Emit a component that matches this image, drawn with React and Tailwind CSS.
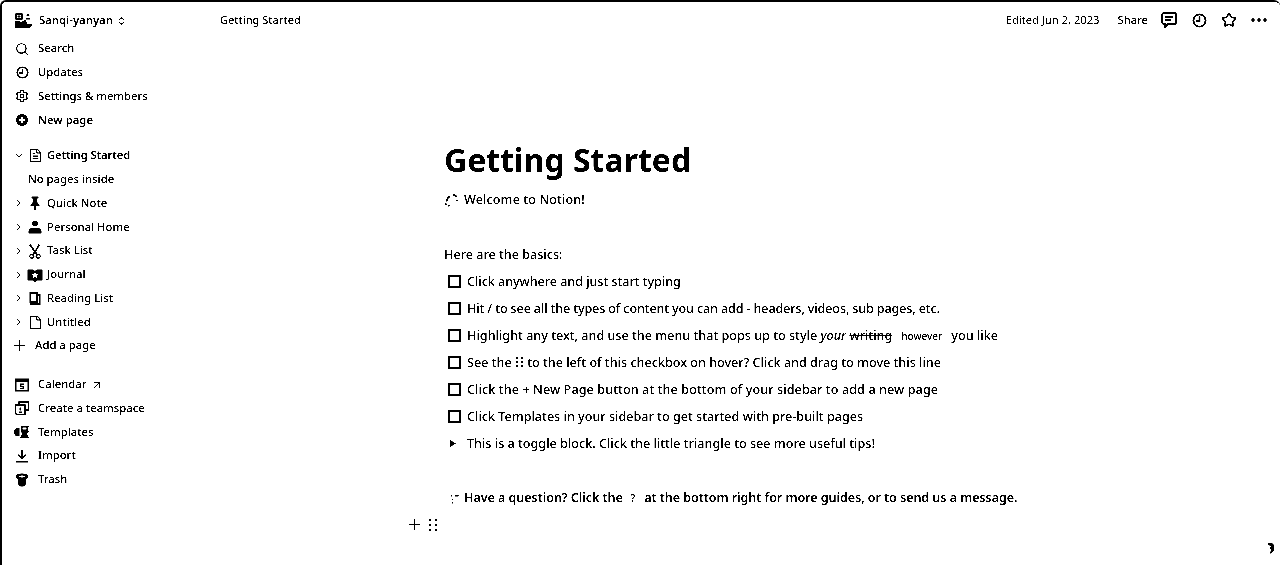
import React from "react";
import { Search, Settings, ChevronRight, ChevronDown, FileText, File, ArrowUpRight, Star } from "lucide-react";

const Svg = ({ children, size = 16, className = "" }) => (
  <svg width={size} height={size} viewBox="0 0 16 16" className={"shrink-0 " + className} fill="currentColor">{children}</svg>
);

const Workspace = () => (
  <svg width="17" height="15" viewBox="0 0 17 15" fill="currentColor" className="shrink-0">
    <rect x="1" y="1" width="6" height="5" fill="none" stroke="currentColor" strokeWidth="1.400" />
    <rect x="2.500" y="2.500" width="3" height="2" />
    <path d="M0 15V8h4.500l1.500 1.500L9.500 7H11l1 4h5v1.500L15 15z" />
    <circle cx="13" cy="2" r="1.600" />
    <path d="M11 5h4v1.600h-4z" />
  </svg>
);
const UpDown = () => (
  <svg width="7" height="10" viewBox="0 0 7 10" fill="none" stroke="currentColor" strokeWidth="1.100" className="shrink-0">
    <path d="M1 4l2.500-2.500L6 4M1 6l2.500 2.500L6 6" />
  </svg>
);
const ClockIcon = ({ size = 14 }) => (
  <svg width={size} height={size} viewBox="0 0 16 16" fill="none" stroke="currentColor" strokeWidth="2" className="shrink-0">
    <circle cx="8" cy="8" r="6.500" />
    <path d="M8 3.500V8.500H4" />
  </svg>
);
const Bubble = () => (
  <svg width="16" height="16" viewBox="0 0 16 16" fill="none" stroke="currentColor" strokeWidth="1.800" className="shrink-0">
    <path d="M3 1h10a2 2 0 0 1 2 2v7a2 2 0 0 1-2 2H7l-3 3v-3H3a2 2 0 0 1-2-2V3a2 2 0 0 1 2-2z" />
    <path d="M4 5h8M4 8h6" strokeWidth="1.400" />
  </svg>
);
const NewPage = () => (
  <Svg>
    <path fillRule="evenodd" d="M8 2a6 6 0 1 1 0 12A6 6 0 0 1 8 2zM7 5v2H5v2h2v2h2V9h2V7H9V5z" />
  </Svg>
);
const PlusBars = ({ size = 11 }) => (
  <svg width={size} height={size} viewBox="0 0 11 11" fill="currentColor" className="shrink-0">
    <rect x="5" y="0" width="1" height="11" shapeRendering="crispEdges" />
    <rect x="0" y="5" width="11" height="1" shapeRendering="crispEdges" />
  </svg>
);
const Pin = () => (
  <Svg>
    <path d="M4.500 1.500h7V3l-1.500.8.500 4 2 2V11H9v4H7v-4H3.500V9.800l2-2 .5-4L4.500 3z" />
  </Svg>
);
const Person = () => (
  <Svg>
    <circle cx="8" cy="4.500" r="3" />
    <path d="M1.500 14.500v-2.500C1.500 10 4 8.800 8 8.800s6.500 1.200 6.500 3.200v2.500z" />
  </Svg>
);
const Tools = () => (
  <Svg>
    <path d="M3.500 1 8 7.500 11.500 1 13 2 9 8.800l1.500 2a2.600 2.600 0 1 1-1.500 1L8 10l-1 1.800a2.600 2.600 0 1 1-1.500-1L7 8.800 2 2zM4.500 12a1.300 1.300 0 1 0 0 2.600 1.300 1.300 0 0 0 0-2.600zm7 0a1.300 1.300 0 1 0 0 2.600 1.300 1.300 0 0 0 0-2.600z" />
  </Svg>
);
const Journal = () => (
  <Svg>
    <path d="M.5 2.500h6L8 4l1.500-1.500h6v11h-5.500L8 15l-2-1.500H.5z" />
    <path fill="#fff" d="M8 5l1.100 2.100 2.400.3-1.800 1.500.6 2.400L8 10l-2.300 1.300.6-2.400-1.800-1.500 2.400-.3z" />
  </Svg>
);
const Reading = () => (
  <Svg>
    <path d="M2.500 2H11v2h2.500v11H4.500a2 2 0 0 1-2-2zM4.200 4v7h5.200V4zM11 6v7.300h1V6z" fillRule="evenodd" />
  </Svg>
);
const CalendarIcon = () => (
  <Svg>
    <path fillRule="evenodd" d="M1 1.500h14v13H1zM2.500 5v8h11V5z" />
    <path d="M6 6.500h4v1.200H7.300v1H10V12H6v-1.200h2.700v-1H6z" />
  </Svg>
);
const Team = () => (
  <Svg>
    <path fill="none" stroke="currentColor" strokeWidth="1.400" d="M5 5V2h9.500v8H11M1.500 5H11v9.500H3a1.500 1.500 0 0 1-1.500-1.500z" />
    <path d="M5.500 7.500h1.500v3H5.500zM5 11.500h3V13H5z" />
  </Svg>
);
const Templates = () => (
  <Svg>
    <path d="M5.500 4.500 4.500 3.500a4.500 4.500 0 0 0 0 9l1-1z" />
    <path d="M6.500 2h8.500L13.500 5.500l1.500 2.500-2.500 1 2.500 5H6l2.500-5-2-1 1-2.500z" />
    <rect x="8.500" y="3.500" width="4" height="2" fill="#fff" />
  </Svg>
);
const ImportIcon = () => (
  <Svg>
    <path d="M7.200 1.500h1.600v7.200l2.600-2.500 1.100 1.100L8 11.700 3.500 7.300l1.100-1.100 2.600 2.500zM2 13h12v1.500H2z" />
  </Svg>
);
const Trash = () => (
  <Svg>
    <path fillRule="evenodd" d="M8 1.500c3.500 0 6 1.200 6 3 0 1-.7 1.800-1.800 2.300L11.500 13c-.3 1-1.700 1.500-3.500 1.500S4.800 14 4.500 13L3.800 6.800C2.700 6.300 2 5.500 2 4.500c0-1.800 2.500-3 6-3zM4.500 4.500c.8.700 2 1 3.500 1s2.700-.3 3.500-1c-.8-.6-2-1-3.500-1s-2.700.4-3.500 1z" />
  </Svg>
);
const Sparkle = () => (
  <Svg size={15}>
    <path d="M10 1h2v1.500h1.500v2H12V3.500h-2zM3 5 5.500 3l1 1.200L4.500 6.200 3.500 9H2zM1 11h1.800v2H1zM4 12.500h2v2H4zM13 7h1.500v2H13z" />
  </Svg>
);
const Dashes = () => (
  <Svg size={10}>
    <path d="M1 2h3v2H1zM8 2h6v2H8zM3 8h2v2H3zM3 13h2v2H3z" />
  </Svg>
);
const Grip = () => (
  <svg width="10" height="14" viewBox="0 0 10 14" className="shrink-0" fill="currentColor">
    <rect x="1" y="1" width="2" height="2" /><rect x="7" y="1" width="2" height="2" />
    <rect x="1" y="6" width="2" height="2" /><rect x="7" y="6" width="2" height="2" />
    <rect x="1" y="11" width="2" height="2" /><rect x="7" y="11" width="2" height="2" />
  </svg>
);
const InlineGrip = () => (
  <svg width="7" height="11" viewBox="0 0 7 11" className="mx-[1px] inline-block shrink-0 align-[-1px]" fill="currentColor">
    <rect x="0" y="0" width="2" height="2" /><rect x="5" y="0" width="2" height="2" />
    <rect x="0" y="4" width="2" height="2" /><rect x="5" y="4" width="2" height="2" />
    <rect x="0" y="8" width="2" height="2" /><rect x="5" y="8" width="2" height="2" />
  </svg>
);
const Lu = ({ I, s = 15, w = 2 }) => <I size={s} strokeWidth={w} className="shrink-0" />;
const Dots = () => (
  <svg width="16" height="4" viewBox="0 0 16 4" fill="currentColor" className="shrink-0">
    <circle cx="2" cy="2" r="1.700" /><circle cx="8" cy="2" r="1.700" /><circle cx="14" cy="2" r="1.700" />
  </svg>
);

const Row = ({ icon, children, bold }) => (
  <div className={"flex h-[23.75px] items-center gap-[8px] pl-[12px] text-[11.3px] " + (bold ? "font-semibold" : "font-medium")}>
    <span className="flex w-[16px] justify-center">{icon}</span>
    <span className="whitespace-nowrap">{children}</span>
  </div>
);

const PageRow = ({ icon, children, open, bold }) => (
  <div className={"flex h-[23.75px] items-center pl-[11px] text-[11.3px] " + (bold ? "font-semibold tracking-[-0.12px]" : "font-medium")}>
    <span className="flex w-[11px] justify-center">
      {open ? <Lu I={ChevronDown} s={10} w={2.500} /> : <Lu I={ChevronRight} s={10} w={2.500} />}
    </span>
    <span className="ml-[3px] flex w-[16px] justify-center">{icon}</span>
    <span className="ml-[4px] whitespace-nowrap">{children}</span>
  </div>
);

const Check = ({ children, className = "" }) => (
  <div className="flex h-[27px] items-center">
    <span className="mb-[2px] ml-[4px] h-[13px] w-[13px] shrink-0 border-2 border-black" />
    <span className={"ml-[6px] whitespace-nowrap " + className}>{children}</span>
  </div>
);

export default function App() {
  return (
    <div className="flex h-[565px] w-[1280px] flex-col overflow-hidden rounded-t-[6px] border-t-2 border-l-2 border-black bg-white font-['Noto_Sans','Open_Sans',sans-serif] text-black contrast-[6]">
      <div className="flex min-h-0 flex-1">
        <aside className="w-[218px] shrink-0 pt-[7px]">
          <div className="flex h-[23px] items-center pl-[13px] text-[11.3px] font-semibold">
            <Workspace />
            <span className="ml-[7px]">Sanqi-yanyan</span>
            <span className="ml-[5px]"><UpDown /></span>
          </div>
          <div className="mt-[5px]">
            <Row icon={<Lu I={Search} s={14} />}>Search</Row>
            <Row icon={<ClockIcon size={13} />}>Updates</Row>
            <Row icon={<Lu I={Settings} s={14} />}>Settings &amp; members</Row>
            <Row bold icon={<NewPage />}>New page</Row>
          </div>
          <div className="mt-[12px]">
            <PageRow open bold icon={<Lu I={FileText} s={15} w={1.800} />}>Getting Started</PageRow>
            <div className="flex h-[23.75px] items-center pl-[26px] text-[11.3px] font-medium">No pages inside</div>
            <PageRow icon={<Pin />}>Quick Note</PageRow>
            <PageRow icon={<Person />}>Personal Home</PageRow>
            <PageRow icon={<Tools />}>Task List</PageRow>
            <PageRow icon={<Journal />}>Journal</PageRow>
            <PageRow icon={<Reading />}>Reading List</PageRow>
            <PageRow icon={<Lu I={File} s={15} w={1.800} />}>Untitled</PageRow>
            <div className="flex h-[23.75px] items-center pl-[12px] text-[11.3px] font-medium">
              <PlusBars />
              <span className="ml-[10px]">Add a page</span>
            </div>
          </div>
          <div className="mt-[15px]">
            <Row icon={<CalendarIcon />}>
              <span className="flex items-center gap-[4px]">Calendar <Lu I={ArrowUpRight} s={12} w={2.200} /></span>
            </Row>
            <Row icon={<Team />}>Create a teamspace</Row>
            <Row icon={<Templates />}>Templates</Row>
            <Row icon={<ImportIcon />}>Import</Row>
            <Row icon={<Trash />}>Trash</Row>
          </div>
        </aside>

        <main className="flex min-w-0 flex-1 flex-col">
          <header className="flex h-[37px] shrink-0 items-center text-[11px] font-medium">
            <span>Getting Started</span>
            <div className="ml-auto flex items-center text-[11.2px]">
              <span className="font-normal">Edited Jun 2, 2023</span>
              <span className="ml-[18px]">Share</span>
              <span className="ml-[13px]"><Bubble /></span>
              <span className="ml-[15px]"><ClockIcon size={15} /></span>
              <span className="ml-[14px]"><Lu I={Star} s={16} w={2.200} /></span>
              <span className="ml-[14px] mr-[13px]"><Dots /></span>
            </div>
          </header>

          <div className="relative flex-1 pl-[224px] text-[12.6px] font-medium">
            <h1 className="mt-[98px] text-[32px] font-bold leading-[46px]">Getting Started</h1>
            <div className="mt-[4px] flex h-[27px] items-center gap-[5px]"><Sparkle /><span className="tracking-[0.1px]">Welcome to Notion!</span></div>
            <div className="mt-[28px] flex h-[27px] items-center">Here are the basics:</div>
            <Check className="tracking-[-0.05px]">Click anywhere and just start typing</Check>
            <Check className="tracking-[-0.14px]">Hit / to see all the types of content you can add - headers, videos, sub pages, etc.</Check>
            <Check>
              <span className="flex items-center">
                Highlight any text, and use the menu that pops up to style&nbsp;<em>your</em>&nbsp;<s>writing</s>
                <span className="ml-[9px] text-[10px]">however</span>
                <span className="ml-[9px]">you like</span>
              </span>
            </Check>
            <Check>See the <InlineGrip /> to the left of this checkbox on hover? Click and drag to move this line</Check>
            <Check className="tracking-[0.09px]">Click the + New Page button at the bottom of your sidebar to add a new page</Check>
            <Check>Click Templates in your sidebar to get started with pre-built pages</Check>
            <div className="flex h-[27px] items-center">
              <svg width="6" height="7" viewBox="0 0 6 7" className="mb-[2px] ml-[6px] shrink-0"><path d="M0 0l6 3.500-6 3.500z" /></svg>
              <span className="ml-[11px] whitespace-nowrap">This is a toggle block. Click the little triangle to see more useful tips!</span>
            </div>
            <div className="mt-[27px] flex h-[27px] items-center font-semibold whitespace-nowrap tracking-[-0.08px]">
              <span className="ml-[6px]"><Dashes /></span>
              <span className="ml-[4px]">Have a question? Click the</span>
              <span className="ml-[8px] text-[10px]">?</span>
              <span className="ml-[9px]">at the bottom right for more guides, or to send us a message.</span>
            </div>
            <div className="mt-[-1px] ml-[-35px] flex h-[27px] items-center gap-[8px]">
              <PlusBars />
              <Grip />
            </div>
            <svg width="8" height="12" viewBox="0 0 8 12" className="absolute right-[5px] bottom-[11px]"><path d="M1 1h4l2 2v5l-3 4-1-1 1-3-1-2 1-2-3-1z" /></svg>
          </div>
        </main>
      </div>
    </div>
  );
}
